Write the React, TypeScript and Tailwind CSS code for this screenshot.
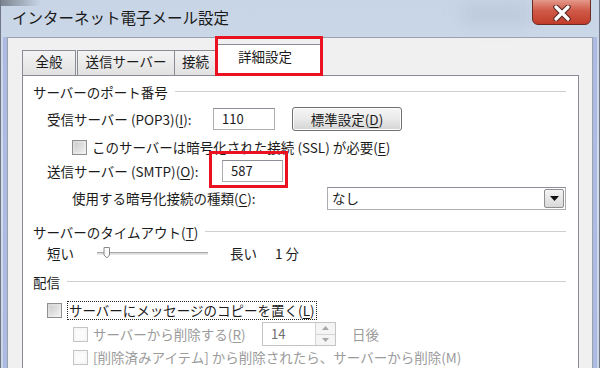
import React from 'react';

const font = { fontFamily: '"Noto Sans CJK JP", "Noto Sans", sans-serif' };

const U: React.FC<{ children: React.ReactNode }> = ({ children }) => (
  <span className="underline underline-offset-2">{children}</span>
);

const CheckBox: React.FC<{ disabled?: boolean }> = ({ disabled }) => (
  <div
    className={`w-[15px] h-[15px] shrink-0 border ${
      disabled ? 'border-[#c4c4c4] bg-[#f7f7f7]' : 'border-[#8e8f8f] bg-linear-to-br from-[#d6d6d6] to-[#f4f4f4]'
    } p-[2px]`}
  >
    <div className={`w-full h-full ${disabled ? 'bg-[#fbfbfb]' : 'bg-linear-to-br from-[#cfcfcf] to-[#ececec]'}`} />
  </div>
);

const GroupHeader: React.FC<{ children: React.ReactNode }> = ({ children }) => (
  <div className="h-[20px] flex items-center pl-[10px]">
    <span className="whitespace-nowrap">{children}</span>
    <div className="flex-1 ml-[7px] h-[2px] border-t border-[#cfcfcf] border-b border-b-white" />
  </div>
);

const TextBox: React.FC<{ value: string; w: string }> = ({ value, w }) => (
  <div
    className={`${w} h-[22px] shrink-0 bg-white border border-[#abadb3] border-t-[#8c8f98] flex items-center pl-[8px] text-[13px]`}
  >
    {value}
  </div>
);

const App: React.FC = () => {
  return (
    <div
      className="relative w-[600px] h-[368px] overflow-hidden flex flex-col bg-linear-to-b from-[#c8d5e6] via-[#d3deeb] to-[#c9d5e8] border-x border-[#6f7784] text-[13.5px] text-[#1b1b1b]"
      style={font}
    >
      {/* title bar */}
      <div className="relative h-[37px] shrink-0">
        <div className="absolute left-0 top-0 w-[40px] h-[6px] bg-linear-to-r from-[#7c8591] to-transparent" />
        <div className="pl-[11px] pt-[6px] text-[15.5px] text-[#1a1a1a]">
          インターネット電子メール設定
        </div>
        <div className="absolute left-[460px] top-[4px] w-[70px] h-[20px] bg-[#b9c6d8] blur-[8px] opacity-70" />
        <div className="absolute left-[531px] top-[-4px] w-[59px] h-[29px] rounded-b-[6px] border border-[#6b2a22] bg-linear-to-b from-[#e9a99e] via-[#cf5a48] to-[#c23b2a] shadow-[inset_0_1px_0_rgba(255,255,255,0.5)] flex items-center justify-center pt-[4px]">
          <svg width="20" height="16" viewBox="0 0 20 16">
            <path d="M4 2 L16 14 M16 2 L4 14" stroke="#5a2a28" strokeWidth="5.5" strokeLinecap="round" />
            <path d="M4 2 L16 14 M16 2 L4 14" stroke="#ffffff" strokeWidth="3.2" strokeLinecap="round" />
          </svg>
        </div>
      </div>

      {/* frame + body */}
      <div className="flex-1 ml-[2px] mr-[2px] border-x-[4px] border-[#adbbe2] flex">
        <div className="flex-1 bg-[#f0f0f0] border border-b-0 border-[#97a1b0] pl-[14px] pr-[13px] flex flex-col">
          {/* tabs */}
          <div className="h-[37px] shrink-0 flex items-end">
            <div className="w-[54px] h-[25px] pb-[4px] border border-b-0 border-[#898c95] bg-linear-to-b from-[#f4f4f4] to-[#e1e1e1] flex items-center justify-center">
              全般
            </div>
            <div className="w-[98px] ml-[1px] h-[25px] pb-[4px] border border-b-0 border-[#898c95] bg-linear-to-b from-[#f4f4f4] to-[#e1e1e1] flex items-center justify-center">
              送信サーバー
            </div>
            <div className="w-[42px] h-[25px] pb-[4px] border border-b-0 border-l-0 border-[#898c95] bg-linear-to-b from-[#f4f4f4] to-[#e1e1e1] flex items-center justify-center">
              接続
            </div>
            <div className="relative z-10 -mb-px w-[104px] h-[32px] border border-b-0 border-[#898c95] bg-white flex items-center justify-center pb-[8px] pr-[8px]">
              詳細設定
            </div>
          </div>

          {/* panel */}
          <div className="flex-1 bg-white border border-b-0 border-[#898c95] pt-[6px] pr-[12px] flex flex-col">
            <GroupHeader>サーバーのポート番号</GroupHeader>

            <div className="mt-[4px] h-[26px] flex items-center pl-[24px]">
              <div className="w-[166px] whitespace-nowrap">
                受信サーバー (POP3)(<U>I</U>):
              </div>
              <TextBox value="110" w="w-[62px]" />
              <div className="ml-[17px] w-[110px] h-[24px] rounded-[3px] border border-[#707070] bg-linear-to-b from-[#f6f6f6] via-[#e9e9e9] to-[#d4d4d4] shadow-[inset_0_0_0_1px_#fcfcfc] flex items-center justify-center">
                標準設定(<U>D</U>)
              </div>
            </div>

            <div className="mt-[5px] h-[20px] flex items-center pl-[49px]">
              <CheckBox />
              <span className="ml-[5px] whitespace-nowrap">
                このサーバーは暗号化された接続 (SSL) が必要(<U>E</U>)
              </span>
            </div>

            <div className="mt-[2px] h-[24px] flex items-center pl-[24px]">
              <div className="w-[175px] whitespace-nowrap">
                送信サーバー (SMTP)(<U>O</U>):
              </div>
              <TextBox value="587" w="w-[61px]" />
            </div>

            <div className="mt-[3px] h-[24px] flex items-center pl-[49px]">
              <div className="w-[255px] whitespace-nowrap">
                使用する暗号化接続の種類(<U>C</U>):
              </div>
              <div className="flex-1 h-[23px] bg-white border border-[#abadb3] border-t-[#8c8f98] flex items-center pl-[4px] pr-[1px]">
                <span className="flex-1">なし</span>
                <div className="w-[20px] h-[19px] border border-[#8f8f8f] rounded-[2px] bg-linear-to-b from-[#f4f4f4] to-[#d9d9d9] flex items-center justify-center">
                  <svg width="9" height="5" viewBox="0 0 9 5">
                    <path d="M0 0 H9 L4.5 5 Z" fill="#111" />
                  </svg>
                </div>
              </div>
            </div>

            <div className="mt-[12px]">
              <GroupHeader>
                サーバーのタイムアウト(<U>T</U>)
              </GroupHeader>
            </div>

            <div className="mt-[1px] h-[20px] flex items-center pl-[24px]">
              <div className="w-[50px]">短い</div>
              <div className="relative w-[111px] h-[12px] flex items-center">
                <div className="w-full h-[3px] border-t border-[#a8a8a8] border-b border-b-[#e6e6e6] bg-[#dcdcdc]" />
                <svg className="absolute left-[6px] top-[0px]" width="8" height="12" viewBox="0 0 8 12">
                  <path d="M1 0.5 H6.5 V8 L3.8 11 L1 8 Z" fill="#fbfbfb" stroke="#8a8a8a" />
                </svg>
              </div>
              <div className="ml-[22px] w-[45px]">長い</div>
              <div>1 分</div>
            </div>

            <div className="mt-[9px]">
              <GroupHeader>配信</GroupHeader>
            </div>

            <div className="mt-[8px] h-[20px] flex items-center pl-[24px]">
              <CheckBox />
              <span className="ml-[5px] px-[1px] border border-dotted border-[#222] whitespace-nowrap leading-[17px]">
                サーバーにメッセージのコピーを置く(<U>L</U>)
              </span>
            </div>

            <div className="mt-[2px] h-[24px] flex items-center pl-[50px] text-[#9b9b9b]">
              <CheckBox disabled />
              <div className="ml-[5px] w-[169px] whitespace-nowrap">
                サーバーから削除する(<U>R</U>)
              </div>
              <div className="w-[74px] h-[24px] border border-[#c2c4c8] bg-white flex items-center">
                <span className="flex-1 pl-[8px] text-[13px] text-[#6e6e6e]">14</span>
                <div className="w-[20px] h-full flex flex-col border-l border-[#d4d4d4]">
                  <div className="flex-1 border-b border-[#d4d4d4] bg-[#f5f5f5] flex items-center justify-center">
                    <svg width="7" height="4" viewBox="0 0 7 4">
                      <path d="M0 4 H7 L3.5 0 Z" fill="#a8a8a8" />
                    </svg>
                  </div>
                  <div className="flex-1 bg-[#f5f5f5] flex items-center justify-center">
                    <svg width="7" height="4" viewBox="0 0 7 4">
                      <path d="M0 0 H7 L3.5 4 Z" fill="#a8a8a8" />
                    </svg>
                  </div>
                </div>
              </div>
              <div className="ml-[16px]">日後</div>
            </div>

            <div className="mt-[2px] h-[18px] flex items-center pl-[50px] text-[#9b9b9b] leading-[16px]">
              <CheckBox disabled />
              <span className="ml-[5px] whitespace-nowrap">
                [削除済みアイテム] から削除されたら、サーバーから削除(M)
              </span>
            </div>
          </div>
        </div>
      </div>

      {/* red annotation boxes */}
      <div className="absolute left-[214px] top-[36px] w-[108px] h-[40px] border-[3px] border-[#ea1220] z-20" />
      <div className="absolute left-[208px] top-[151px] w-[79px] h-[37px] border-[3px] border-[#ea1220] z-20" />
    </div>
  );
};

export default App;
